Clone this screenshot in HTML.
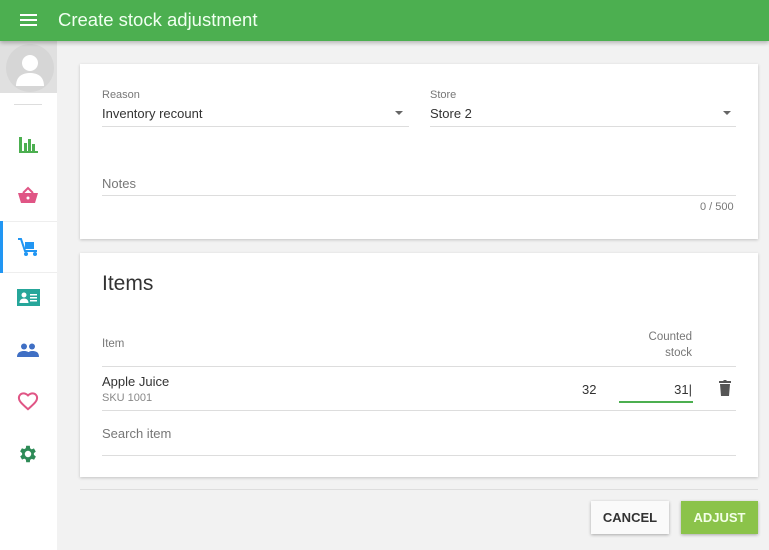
<!DOCTYPE html><html><head><style>
*{margin:0;padding:0;box-sizing:border-box}
body{width:769px;height:550px;overflow:hidden;background:#f2f2f2;font-family:"Liberation Sans",sans-serif;position:relative;color:#333}
.hdr{position:absolute;left:0;top:0;width:769px;height:41px;background:#4caf50;box-shadow:0 2px 4px rgba(0,0,0,.25);z-index:2}
.hdr .t{position:absolute;left:58px;top:9px;font-size:18.5px;color:#f0fff0}
.ham{position:absolute;left:20px;top:14px;width:17px;height:2px;background:#fff;box-shadow:0 5px 0 #fff,0 10px 0 #fff}
.side{position:absolute;left:0;top:41px;width:57px;height:509px;background:#fff}
.av{height:52px;background:#e0e0e0;position:relative;overflow:hidden}
.ic{position:absolute;left:17px}
.card{position:absolute;left:80px;width:678px;background:#fff;box-shadow:0 1px 3px rgba(0,0,0,.2)}
.a{position:absolute;font-size:13px}
.lbl{font-size:11px;color:#777}
.line{position:absolute;height:1px;background:#ddd}
.caret{position:absolute;width:0;height:0;border-left:4px solid transparent;border-right:4px solid transparent;border-top:4px solid #666}
.btn{position:absolute;top:501px;height:33px;font-size:13px;font-weight:bold;text-align:center;line-height:33px;box-shadow:0 1px 3px rgba(0,0,0,.3)}
</style></head><body>
<div class="hdr"><div class="ham"></div><div class="t">Create stock adjustment</div></div>
<div class="side"><div class="av"><svg style="position:absolute;left:6px;top:3px" width="48" height="48" viewBox="0 0 48 48"><circle cx="24" cy="24" r="24" fill="#d6d6d6"/><circle cx="24" cy="19" r="8" fill="#fff"/><path d="M10 42c0-10 7-13 14-13s14 3 14 13z" fill="#fff"/></svg></div>
<div style="position:absolute;left:14px;top:63px;width:28px;height:1px;background:#ddd"></div>
<svg class="ic" style="top:93px" width="22" height="20" viewBox="0 0 22 20"><path d="M2 3h3v14h16v2H2z M7 9h3v8H7z M11 5h3v12h-3z M15 10h3v7h-3z" fill="#4caf50"/></svg>
<svg class="ic" style="top:145px" width="22" height="20" viewBox="0 0 22 20"><path d="M1 7h20l-3 10H4z" fill="#e05585"/><path d="M6 7l5-5 5 5" stroke="#e05585" stroke-width="2" fill="none"/><circle cx="11" cy="12" r="1.5" fill="#fff"/></svg>
<div style="position:absolute;left:0;top:180px;width:57px;height:52px;background:#fff;border-top:1px solid #eee;border-bottom:1px solid #eee"></div>
<div style="position:absolute;left:0;top:180px;width:3px;height:52px;background:#2196f3"></div>
<svg class="ic" style="top:196px" width="22" height="20" viewBox="0 0 22 20"><path d="M1 2h3l4 12h12" stroke="#2196f3" stroke-width="2" fill="none"/><rect x="8" y="5" width="9" height="7" fill="#2196f3"/><circle cx="9" cy="17" r="2" fill="#2196f3"/><circle cx="18" cy="17" r="2" fill="#2196f3"/></svg>
<svg class="ic" style="top:248px" width="23" height="18" viewBox="0 0 23 18"><rect x="0" y="0" width="23" height="17" fill="#26a69a"/><circle cx="7" cy="6" r="2.5" fill="#fff"/><path d="M2.5 14c0-3 2-4.5 4.5-4.5s4.5 1.5 4.5 4.5z M13 5h7v1.5h-7z M13 8h7v1.5h-7z M13 11h7v1.5h-7z" fill="#fff"/></svg>
<svg class="ic" style="top:302px" width="22" height="14" viewBox="0 0 22 14"><circle cx="7" cy="3.5" r="3" fill="#3f6fc4"/><circle cx="15" cy="3.5" r="3" fill="#3f6fc4"/><path d="M0 14c0-5 4-6 7-6s7 1 7 6z M10 14c0-3 1-6 5-6s7 1 7 6z" fill="#3f6fc4"/></svg>
<svg class="ic" style="top:350px" width="22" height="20" viewBox="0 0 24 22"><path d="M12 20l-1.5-1.3C5 13.7 2 11 2 7.5 2 4.8 4.2 2.6 7 2.6c1.8 0 3.6.9 5 2.3 1.4-1.4 3.2-2.3 5-2.3 2.8 0 5 2.2 5 4.9 0 3.5-3 6.2-8.5 11.2z" fill="none" stroke="#e05585" stroke-width="2.2"/></svg>
<svg class="ic" style="top:402px" width="22" height="22" viewBox="0 0 24 24"><path fill="#2e8b57" d="M19.4 13a7.5 7.5 0 000-2l2.1-1.6-2-3.5-2.5 1a7 7 0 00-1.7-1L15 3h-4l-.4 2.7a7 7 0 00-1.7 1l-2.5-1-2 3.5L6.6 11a7.5 7.5 0 000 2l-2.1 1.6 2 3.5 2.5-1a7 7 0 001.7 1L11 21h4l.4-2.7a7 7 0 001.7-1l2.5 1 2-3.5zM13 15.5a3.5 3.5 0 110-7 3.5 3.5 0 010 7z" transform="translate(-1 0)"/></svg>
</div>
<div class="card" style="top:64px;height:175px">
<div class="a lbl" style="left:22px;top:25px">Reason</div>
<div class="a" style="left:22px;top:42px">Inventory recount</div>
<div class="caret" style="left:315px;top:47px"></div>
<div class="line" style="left:22px;top:62px;width:307px"></div>
<div class="a lbl" style="left:350px;top:25px">Store</div>
<div class="a" style="left:350px;top:42px">Store 2</div>
<div class="caret" style="left:643px;top:47px"></div>
<div class="line" style="left:350px;top:62px;width:306px"></div>
<div class="a" style="left:22px;top:112px;color:#777">Notes</div>
<div class="line" style="left:22px;top:131px;width:634px"></div>
<div class="a" style="left:620px;top:137px;font-size:11px;color:#777">0 / 500</div>
</div>
<div class="card" style="top:253px;height:224px">
<div class="a" style="left:22px;top:19px;font-size:21px;color:#333">Items</div>
<div class="a lbl" style="left:22px;top:85px;font-size:11.5px">Item</div>
<div class="a lbl" style="left:540px;top:76px;width:72px;text-align:right;font-size:11.5px;line-height:16px">Counted<br>stock</div>
<div class="line" style="left:22px;top:113px;width:634px"></div>
<div class="a" style="left:22px;top:121px">Apple Juice</div>
<div class="a" style="left:22px;top:139px;font-size:11px;color:#888">SKU 1001</div>
<div class="a" style="left:502px;top:129px">32</div>
<div class="a" style="left:580px;top:129px;width:32px;text-align:right">31|</div>
<div style="position:absolute;left:539px;top:148px;width:74px;height:2px;background:#4caf50"></div>
<svg style="position:absolute;left:638px;top:126px" width="14" height="17" viewBox="0 0 14 17"><path d="M1 2h4l1-1h2l1 1h4v2H1z M2 5h10l-1 12H3z" fill="#555"/></svg>
<div class="line" style="left:22px;top:157px;width:634px"></div>
<div class="a" style="left:22px;top:173px;color:#777">Search item</div>
<div class="line" style="left:22px;top:202px;width:634px"></div>
</div>
<div style="position:absolute;left:80px;top:489px;width:678px;height:1px;background:#ddd"></div>
<div class="btn" style="left:591px;width:78px;background:#fafafa;color:#333">CANCEL</div>
<div class="btn" style="left:681px;width:77px;background:#8bc34a;color:#f4ffe8">ADJUST</div>
</body></html>
